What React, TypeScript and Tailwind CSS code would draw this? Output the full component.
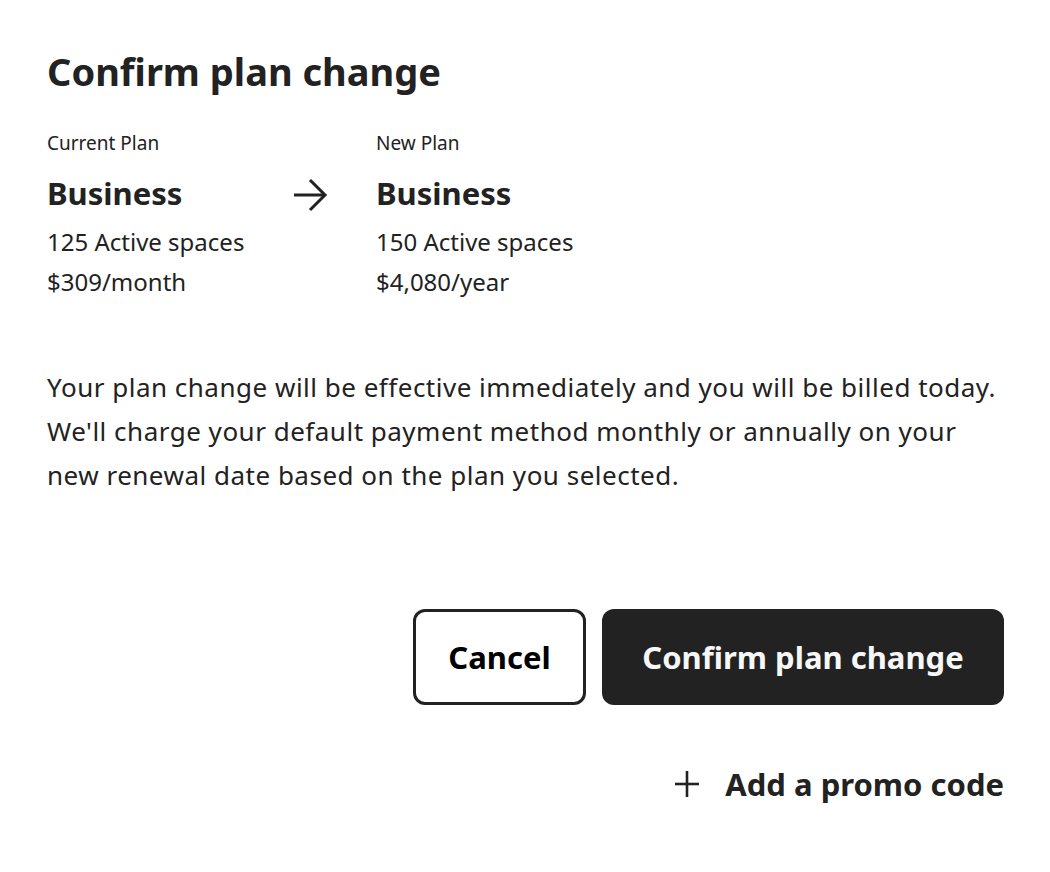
function ArrowRight() {
  return (
    <svg width="36" height="34" viewBox="0 0 36 34" fill="none" stroke="#222" strokeWidth="3">
      <path d="M2 17 H33" />
      <path d="M18 2 L33 17 L18 32" />
    </svg>
  );
}

function PlusIcon() {
  return (
    <svg width="24" height="26" viewBox="0 0 24 26" fill="none" stroke="#222" strokeWidth="2.6">
      <path d="M12 0 V26" />
      <path d="M0 13 H24" />
    </svg>
  );
}

function PlanColumn({ label, name, spaces, price }: { label: string; name: string; spaces: string; price: string }) {
  return (
    <div className="flex flex-col">
      <span className="text-[19px] leading-[24px]">{label}</span>
      <span className="mt-[18px] text-[31px] leading-[40px] font-bold">{name}</span>
      <span className="mt-[9px] text-[24px] leading-[40px]">{spaces}</span>
      <span className="text-[24px] leading-[40px]">{price}</span>
    </div>
  );
}

export default function App() {
  return (
    <div
      className="min-h-screen bg-white text-[#222] pl-[47px] pr-[46px] pt-[47px]"
      style={{ fontFamily: '"Noto Sans", Roboto, sans-serif' }}
    >
      <h1 className="text-[38px] leading-[48px] font-bold">Confirm plan change</h1>

      <div className="mt-[36px] flex">
        <div className="w-[245px]">
          <PlanColumn label="Current Plan" name="Business" spaces="125 Active spaces" price="$309/month" />
        </div>
        <div className="mt-[47px]">
          <ArrowRight />
        </div>
        <div className="ml-[48px]">
          <PlanColumn label="New Plan" name="Business" spaces="150 Active spaces" price="$4,080/year" />
        </div>
      </div>

      <p className="mt-[63px] text-[26px] leading-[44px] tracking-[0.5px]">
        Your plan change will be effective immediately and you will be billed today.
        <br />
        We'll charge your default payment method monthly or annually on your
        <br />
        new renewal date based on the plan you selected.
      </p>

      <div className="mt-[112px] flex justify-end gap-[16px]">
        <button className="w-[173px] h-[96px] rounded-[12px] border-[3px] border-[#222] bg-white text-[31px] font-bold text-black">
          Cancel
        </button>
        <button className="w-[402px] h-[96px] rounded-[12px] bg-[#222] text-[31px] font-bold text-[#f7f7f7]">
          Confirm plan change
        </button>
      </div>

      <div className="mt-[59px] flex justify-end">
        <button className="flex items-center gap-[26px] text-[31px] leading-[40px] font-bold">
          <PlusIcon />
          Add a promo code
        </button>
      </div>
    </div>
  );
}
